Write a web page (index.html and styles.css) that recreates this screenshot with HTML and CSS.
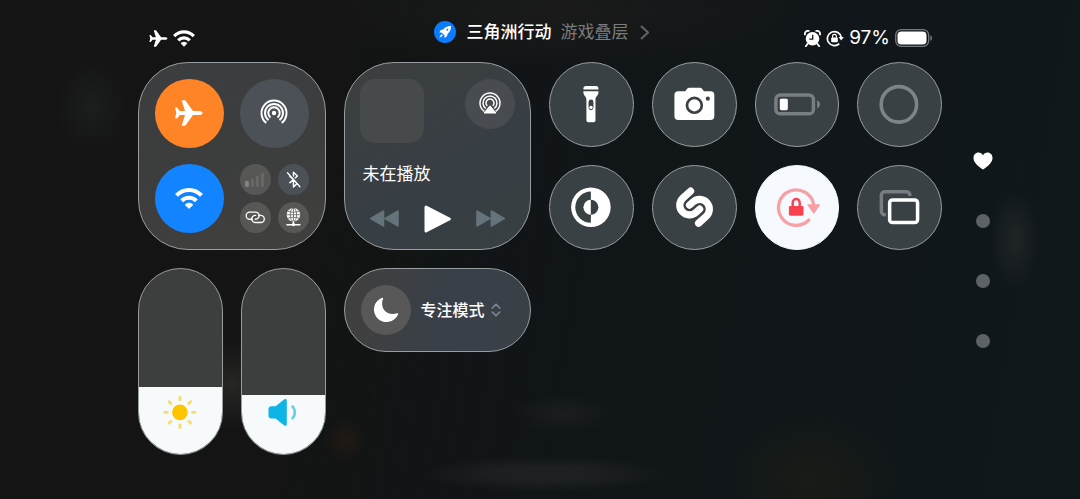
FILE: index.html
```
<!DOCTYPE html>
<html lang="zh-CN">
<head>
  <meta charset="UTF-8">
  <meta name="viewport" content="width=device-width, initial-scale=1">
  <title>控制中心</title>
  <link rel="stylesheet" href="styles.css">
</head>
<body>

<!-- shared icons -->
<svg class="sprite" aria-hidden="true">
  <symbol id="plane" viewBox="0 0 28 26">
    <path d="M27.6 13c0 1.4-1.8 2.1-3.6 2.1h-6L10.8 25c-.3.5-.6.7-1 .7H7.4c-.5 0-.7-.4-.5-.9L10 15.1H4.8l-2.4 3c-.2.3-.5.4-.9.4H.7c-.4 0-.6-.3-.5-.7L1.3 13 .2 8.2c-.1-.4.1-.7.5-.7h.8c.4 0 .7.1.9.4l2.4 3H10L6.9 1.2C6.7.7 6.9.3 7.4.3h2.4c.4 0 .7.2 1 .7L18 10.9h6c1.8 0 3.6.7 3.6 2.1z"/>
  </symbol>
  <symbol id="wifi" viewBox="0 0 28 21">
    <path d="M1.500 7.400a17.200 17.200 0 0 1 25 0M6.700 12.800a10.200 10.200 0 0 1 14.600 0" fill="none" stroke="currentColor" stroke-width="4"/>
    <path d="M14 20.600 10 16.700a5.600 5.600 0 0 1 8 0z" stroke="currentColor" stroke-width=".6" stroke-linejoin="round"/>
  </symbol>
</svg>

<header class="status">
  <div class="status-left">
    <svg class="s-plane"><use href="#plane"/></svg>
    <svg class="s-wifi"><use href="#wifi"/></svg>
  </div>
  <a class="game" href="#">
    <svg class="rocket" viewBox="0 0 22 22">
      <circle cx="11" cy="11" r="11" fill="#0a7cff"/>
      <path d="M17 5c-3.4-.2-5.800 1-7.700 3.500l-2.500.6-1.600 2.500 2.300-.1 3.100 3.100-.1 2.300 2.500-1.600.6-2.500C16 10.800 17.200 8.400 17 5z"/>
      <path d="M7.300 13 5.200 16.800 9 14.700z"/>
      <circle cx="13.300" cy="8.700" r="1" fill="#0a7cff"/>
    </svg>
    <span class="game-name">三角洲行动</span>
    <span class="game-sub">游戏叠层</span>
    <svg class="chev" viewBox="0 0 9 15"><path d="M1 1l7 6.500-7 6.500"/></svg>
  </a>
  <div class="status-right">
    <svg class="s-alarm" viewBox="0 0 17 17">
      <circle cx="8.500" cy="8.800" r="6.800"/>
      <path d="M1 4.500A3 3 0 0 1 4.700.9M16 4.500A3 3 0 0 0 12.300.9M3.500 14l-1.700 2.200M13.500 14l1.700 2.200" fill="none" stroke="#fff" stroke-width="1.800" stroke-linecap="round"/>
      <path d="M8.700 4.800v4.400H5.300" fill="none" stroke="#14181a" stroke-width="1.300"/>
    </svg>
    <svg class="s-lock" viewBox="0 0 18 17">
      <path d="M15.300 7.500A7 7 0 1 0 13.300 13.600" fill="none" stroke="#fff" stroke-width="1.700"/>
      <path d="M12.600 7h5.200l-2.600 3.600z"/>
      <rect x="5.200" y="7.500" width="6.600" height="4.800" rx=".8"/>
      <path d="M6.600 7.800V6.300a1.900 1.900 0 0 1 3.800 0v1.500" fill="none" stroke="#fff" stroke-width="1.200"/>
    </svg>
    <span class="percent">97%</span>
    <svg class="s-battery" viewBox="0 0 38 18">
      <rect x=".7" y=".7" width="33" height="16.600" rx="5.500" fill="none" stroke="#75797b" stroke-width="1.300"/>
      <rect x="2.500" y="2.500" width="29" height="13" rx="3.800"/>
      <path d="M35.300 6.200c2.300.7 2.300 4.900 0 5.600z" fill="#75797b"/>
    </svg>
  </div>
</header>

<main class="page">
  <div class="grid">

    <section class="tile big connect">
      <button class="round orange" aria-label="飞行模式"><svg class="i-plane"><use href="#plane"/></svg></button>
      <button class="round slate" aria-label="隔空投送">
        <svg class="i-drop" viewBox="0 0 28 28">
          <g fill="none" stroke="#fff" stroke-width="2">
            <path d="M6.300 23.900a12.500 12.500 0 1 1 15.400 0"/>
            <path d="M8.500 21.100a9 9 0 1 1 11 0"/>
            <path d="M10.500 18.500a5.700 5.700 0 1 1 7 0"/>
          </g>
          <circle cx="14" cy="14" r="2.200"/>
        </svg>
      </button>
      <button class="round blue" aria-label="无线局域网"><svg class="i-wifi"><use href="#wifi"/></svg></button>
      <div class="mini">
        <button class="round dim" aria-label="蜂窝数据">
          <svg viewBox="0 0 31 31">
            <rect x="5" y="17" width="4" height="6" rx="1.500" fill="#838383"/>
            <g fill="#676867">
              <rect x="11" y="15" width="3" height="8" rx="1"/>
              <rect x="16" y="12" width="3" height="11" rx="1"/>
              <rect x="21" y="9" width="3" height="14" rx="1"/>
            </g>
          </svg>
        </button>
        <button class="round slate" aria-label="蓝牙">
          <svg class="line" viewBox="0 0 31 31">
            <path d="M11.500 12l8 7.200-4 3.800V8.200l4 3.800-8 7.200" stroke="#fff" stroke-width="1.400" stroke-linejoin="round"/>
            <path d="M11 8.700l12 13.400" stroke="#4b5157" stroke-width="1.500"/>
            <path d="M9.500 8.800l12.500 14" stroke="#fff" stroke-width="1.300" stroke-linecap="round"/>
          </svg>
        </button>
        <button class="round dim" aria-label="个人热点">
          <svg class="line" viewBox="0 0 31 31" stroke="#fff" stroke-width="1.300" stroke-linecap="round">
            <path d="M12.500 17.300H9.800a3.600 3.600 0 0 1 0-7.200h5.900a3.600 3.600 0 0 1 2.900 5.700c-.9 1.300-2.200 1.600-3.300 1.500"/>
            <path d="M18.800 13.400h2a3.600 3.600 0 0 1 0 7.200h-5.500a3.600 3.600 0 0 1-2.900-5.700c.9-1.300 2.200-1.600 3.300-1.500"/>
          </svg>
        </button>
        <button class="round dim" aria-label="VPN">
          <svg viewBox="0 0 31 31">
            <circle cx="15.500" cy="12.800" r="6.800"/>
            <g fill="none" stroke="#5b5b59" stroke-width=".8">
              <ellipse cx="15.500" cy="12.800" rx="3.200" ry="6.800"/>
              <path d="M15.500 6v13.500M9 12.800h13M10 9.300c3.500 1.300 7.500 1.300 11 0M10 16.300c3.500-1.300 7.500-1.300 11 0"/>
            </g>
            <path d="M15.500 19.400v3.400M8.500 22.800h14M13.300 22.800h4.400" fill="none" stroke="#fff" stroke-width="1.500"/>
            <circle cx="15.500" cy="22.700" r="1.700"/>
          </svg>
        </button>
      </div>
    </section>

    <section class="tile big media">
      <div class="media-top">
        <div class="album"></div>
        <button class="round cast" aria-label="隔空播放">
          <svg class="i-cast" viewBox="0 0 24 24">
            <g fill="none" stroke="#fff" stroke-width="1.500">
              <path d="M6.300 19.300a10 10 0 1 1 11.400 0"/>
              <path d="M7.700 16.500a7 7 0 1 1 8.600 0"/>
              <path d="M9.200 13.900a4 4 0 1 1 5.600 0"/>
            </g>
            <path d="M12 13.800l6 7.200H6z" stroke="#fff" stroke-linejoin="round"/>
          </svg>
        </button>
      </div>
      <p class="media-title">未在播放</p>
      <div class="controls">
        <button aria-label="上一首"><svg class="i-skip" viewBox="0 0 29 17"><path d="M13.300 1.300v14.400L1 8.500zM27.800 1.300v14.400L15.300 8.500z"/></svg></button>
        <button aria-label="播放"><svg class="i-play" viewBox="0 0 27 28"><path d="M2 2l23.300 12L2 26z"/></svg></button>
        <button aria-label="下一首"><svg class="i-skip" viewBox="0 0 29 17"><path d="M1.200 1.300v14.400l12.400-7.200zM15.600 1.300v14.400L28 8.500z"/></svg></button>
      </div>
    </section>

    <button class="tile circle" aria-label="手电筒">
      <svg viewBox="0 0 85 85">
        <path d="M34.300 27.300v-1.100c0-1.500 1-2.500 2.500-2.500h10.500c1.500 0 2.500 1 2.500 2.500v1.100zM34.300 29h15.500v1c0 3.500-3.100 4-3.100 7.500v21.300c0 1.200-.8 2-2 2h-5.300c-1.200 0-2-.8-2-2V37.500c0-3.500-3.100-4-3.100-7.500z"/>
        <rect x="39.600" y="37.500" width="5" height="11" rx="2.500" fill="#3a4145"/>
        <circle cx="42.100" cy="45.800" r="1.800"/>
      </svg>
    </button>
    <button class="tile circle" aria-label="相机">
      <svg viewBox="0 0 85 85">
        <path d="M26 29h6.500c1.500 0 2.200-3.700 4.500-3.700h11.500c2.300 0 3 3.700 4.500 3.700h6a4 4 0 0 1 4 4v21.500a4 4 0 0 1-4 4H26a4 4 0 0 1-4-4V33a4 4 0 0 1 4-4z"/>
        <circle cx="42.500" cy="43.500" r="7.600" fill="none" stroke="#3a4145" stroke-width="2.800"/>
        <circle cx="56.300" cy="36.600" r="2.100" fill="#3a4145"/>
      </svg>
    </button>
    <button class="tile circle" aria-label="低电量模式">
      <svg viewBox="0 0 85 85">
        <rect x="20.400" y="32.800" width="38.600" height="19.400" rx="4.500" fill="none" stroke="#797e83" stroke-width="3.500"/>
        <rect x="24.500" y="36.700" width="8.200" height="11.800" rx="1.500"/>
        <path d="M62.700 38.300c4 1.200 4 7.200 0 8.400z" fill="#797e83"/>
      </svg>
    </button>
    <button class="tile circle" aria-label="操作">
      <svg viewBox="0 0 85 85"><circle cx="42" cy="42.500" r="18.200" fill="none" stroke="#7e8387" stroke-width="3.700"/></svg>
    </button>

    <button class="tile circle" aria-label="深色模式">
      <svg viewBox="0 0 85 85">
        <circle cx="42" cy="42.300" r="20.300"/>
        <path d="M42 26.300a16 16 0 0 0 0 32z" fill="#3a4145"/>
        <path d="M42 34.600a7.700 7.700 0 0 0 0 15.400z"/>
        <path d="M42 34.600a7.700 7.700 0 0 1 0 15.400z" fill="#3a4145"/>
      </svg>
    </button>
    <button class="tile circle" aria-label="音乐识别">
      <svg viewBox="0 0 85 85">
        <g transform="translate(42.700 42.300) rotate(-42)" fill="none" stroke="#fff" stroke-width="7.400" stroke-linecap="round">
          <path d="M8-15H-2.500a10 10 0 0 0 0 20H2.500"/>
          <path d="M-8 15H2.500a10 10 0 0 0 0-20H-2.500"/>
        </g>
      </svg>
    </button>
    <button class="tile circle on" aria-label="方向锁定" aria-pressed="true">
      <svg viewBox="0 0 85 85">
        <path d="M59.300 40A18.200 18.200 0 1 0 54.300 55.500" fill="none" stroke="#f6a1a6" stroke-width="3.400" stroke-linecap="round"/>
        <path d="M53.500 40h11.500l-5.700 8z" fill="#f6a1a6" stroke="#f6a1a6" stroke-width="1.500" stroke-linejoin="round"/>
        <rect x="33.800" y="41" width="15" height="10" rx="1.500" fill="#f8434f"/>
        <path d="M37.700 41.500v-4a3.600 3.600 0 0 1 7.200 0v4" fill="none" stroke="#f8434f" stroke-width="2.500"/>
      </svg>
    </button>
    <button class="tile circle" aria-label="屏幕镜像">
      <svg class="line" viewBox="0 0 85 85" stroke-width="3.600">
        <path d="M28.600 50H27.500a3.500 3.500 0 0 1-3.500-3.500V30a3.500 3.500 0 0 1 3.500-3.500h22.300a3.500 3.500 0 0 1 3.500 3.500v.9" stroke="#787d81"/>
        <rect x="32.500" y="34.800" width="28.700" height="23.300" rx="3" stroke="#fff"/>
      </svg>
    </button>

    <label class="tile slider">
      <input type="range" min="0" max="100" value="36" style="--level: 36%" aria-label="亮度">
      <svg viewBox="0 0 85 85">
        <circle cx="42" cy="42.500" r="8" fill="#fdc500"/>
        <path d="M42 29.500V27M42 55.500V58M29 42.500H26.500M55 42.500H57.500M32.800 33.300L31 31.500M51.200 51.700L53 53.500M51.200 33.300L53 31.500M32.800 51.700L31 53.500" stroke="#f5dc73" stroke-width="3" stroke-linecap="round"/>
      </svg>
    </label>
    <label class="tile slider">
      <input type="range" min="0" max="100" value="32" style="--level: 32%" aria-label="音量">
      <svg viewBox="0 0 85 85">
        <path d="M30.500 37h4.200l9-7.200c.8-.6 1.500-.3 1.500.6v24.200c0 .9-.7 1.200-1.500.6l-9-7.200h-4.200c-1.500 0-2.500-1-2.500-2.500v-6c0-1.500 1-2.500 2.500-2.500z" fill="#0eb4e6" stroke="#0eb4e6" stroke-width="1.600" stroke-linejoin="round"/>
        <path d="M52 36.500c3 3.800 3 8.200 0 12" fill="none" stroke="#6bcfe8" stroke-width="2.800" stroke-linecap="round"/>
      </svg>
    </label>

    <button class="tile focus">
      <span class="round moon"><svg viewBox="0 0 49 49"><path d="M20.700 12.500c.7-.3 1.200.2.900.9-3.500 8.600 3 17.300 13.800 14.400.8-.2 1.300.3.900 1A12.300 12.300 0 1 1 20.700 12.500z"/></svg></span>
      <span class="focus-name">专注模式</span>
      <svg class="updown" viewBox="0 0 10 14"><path d="M1.200 5L5 1.300 8.800 5M1.200 9L5 12.700 8.800 9"/></svg>
    </button>

  </div>

  <nav class="pager">
    <button aria-label="个人收藏"><svg class="heart" viewBox="0 0 20 18"><path d="M10 17.600C4.500 13.800.5 10.200.5 5.900.5 2.900 2.700.6 5.400.6c2 0 3.700 1 4.600 2.800C10.900 1.600 12.600.6 14.600.6c2.700 0 4.900 2.300 4.900 5.300 0 4.300-4 7.900-9.500 11.700z"/></svg></button>
    <button aria-label="第 2 页"><span class="dot"></span></button>
    <button aria-label="第 3 页"><span class="dot"></span></button>
    <button aria-label="第 4 页"><span class="dot"></span></button>
  </nav>
</main>

<script>
document.querySelectorAll('.slider input').forEach(function (input) {
  input.addEventListener('input', function () {
    this.style.setProperty('--level', this.value + '%');
  });
});
</script>

</body>
</html>
```
FILE: styles.css
```
* { box-sizing: border-box; }

body {
  margin: 0;
  min-height: 100vh;
  color: #fff;
  font-family: Inter, "Noto Sans CJK SC", sans-serif;
  background:
    radial-gradient(ellipse 125px 18px at 545px 474px, #1d2021 40%, transparent),
    radial-gradient(ellipse 50px 20px at 563px 414px, #1b1e1e, transparent),
    radial-gradient(circle 22px at 345px 440px, #211915, transparent),
    radial-gradient(ellipse 25px 50px at 1015px 240px, #202527, transparent),
    radial-gradient(ellipse 35px 45px at 92px 106px, #1c1e1e, transparent),
    radial-gradient(circle 45px at 232px 385px, #262625, transparent),
    radial-gradient(ellipse 90px 70px at 810px 480px, #181c16, transparent),
    radial-gradient(ellipse 260px 60px at 560px 10px, #1a1b1a, transparent),
    linear-gradient(100deg, #141514 0%, #131413 30%, #101518 55%, #10181b 100%);
}

svg { display: block; fill: #fff; color: #fff; }
.line { fill: none; }
.sprite { position: absolute; width: 0; height: 0; }

button { border: none; padding: 0; margin: 0; background: none; color: inherit; font: inherit; cursor: pointer; }

/* status bar */
.status { display: grid; grid-template-columns: 1fr auto 1fr; align-items: center; height: 62px; padding: 0 147px 0 149px; }
.status-left, .status-right { display: flex; align-items: center; padding-top: 14px; }
.status-left { gap: 5px; }
.status-right { justify-content: flex-end; gap: 5px; }
.s-plane { width: 19px; height: 17px; }
.s-wifi { width: 22px; height: 17px; }
.s-alarm { width: 17px; height: 17px; }
.s-lock { width: 18px; height: 17px; }
.s-battery { width: 38px; height: 18px; }
.percent { font-size: 19px; line-height: 24px; }

.game { display: flex; align-items: center; padding-top: 2px; font-size: 17px; line-height: 26px; color: #fff; text-decoration: none; }
.rocket { width: 22px; height: 22px; margin-right: 11px; }
.game-name { font-weight: 500; margin-right: 9px; }
.game-sub { color: #7b7d7e; margin-right: 11px; }
.chev { width: 9px; height: 15px; fill: none; stroke: #626566; stroke-width: 2; }

/* tiles */
.page { display: grid; grid-template-columns: 1fr 82px; align-items: start; padding: 0 56px 0 138px; }
.grid { display: grid; grid-template-columns: repeat(8, minmax(0, 1fr)); grid-template-rows: repeat(4, minmax(0, 1fr)); gap: 18px; aspect-ratio: 804 / 393; }
.tile { min-width: 0; min-height: 0; border: 1px solid #9a9d9f; border-radius: 50px; background: #3a4145; overflow: hidden; }
.big { grid-column: span 2; grid-row: span 2; }

.round { display: flex; align-items: center; justify-content: center; border-radius: 50%; }
.orange { background: #ff8425; }
.blue { background: #1384ff; }
.slate { background: #4b5156; }
.dim { background: #575856; }

.connect { display: grid; grid-template-columns: 1fr 1fr; grid-template-rows: 1fr 1fr; gap: 16px; padding: 16px; background: linear-gradient(170deg, #3b3e40, #3c3d3d 50%, #40403d); }
.mini { display: grid; grid-template-columns: 1fr 1fr; grid-template-rows: 1fr 1fr; gap: 7px; }
.mini svg { width: 100%; }
.i-plane { width: 28px; height: 26px; }
.i-drop { width: 28px; height: 28px; }
.i-wifi { width: 28px; height: 21px; }

.media { display: flex; flex-direction: column; padding: 16px 15px; background: linear-gradient(150deg, #3c3f3f, #373e44 60%, #394043); }
.media-top { display: flex; justify-content: space-between; align-items: flex-start; }
.album { width: 64px; height: 64px; border-radius: 15px; background: #474a4a; }
.cast { width: 50px; height: 50px; background: #484c50; }
.i-cast { width: 24px; height: 24px; }
.media-title { margin: 18px 0 0 3px; font-size: 17px; line-height: 26px; }
.controls { display: flex; justify-content: space-between; align-items: center; margin-top: auto; padding: 0 10px; }
.i-skip { width: 29px; height: 17px; fill: #65737b; stroke: #65737b; stroke-width: 2; stroke-linejoin: round; }
.i-play { width: 27px; height: 28px; stroke: #fff; stroke-width: 3; stroke-linejoin: round; }

.circle { border-radius: 50%; }
.circle svg { width: 100%; }
.on { background: #f6fafe; border-color: #f6fafe; }

.slider { display: grid; grid-row: span 2; background: #3d3f3e; }
.slider input, .slider svg { grid-area: 1 / 1; width: 100%; }
.slider input {
  appearance: none;
  writing-mode: vertical-lr;
  direction: rtl;
  height: 100%;
  margin: 0;
  background: linear-gradient(to top, #f6fafa var(--level), transparent var(--level));
}
.slider input::-webkit-slider-thumb { appearance: none; width: 100%; height: 1px; }
.slider svg { align-self: end; pointer-events: none; }

.focus { grid-column: span 2; display: flex; align-items: center; padding: 0 16px; background: linear-gradient(100deg, #403f3d, #39404a 60%, #394146); }
.moon { width: 50px; height: 50px; margin-right: 10px; background: #575857; }
.moon svg { width: 50px; height: 50px; }
.focus-name { font-size: 16px; line-height: 24px; font-weight: 500; margin-right: 6px; }
.updown { width: 10px; height: 14px; fill: none; stroke: #838a90; stroke-width: 1.6px; stroke-linecap: round; }

/* page dots */
.pager { display: grid; grid-auto-rows: 60px; justify-items: center; padding-top: 69px; }
.pager button { display: flex; align-items: center; }
.heart { width: 20px; height: 18px; }
.dot { width: 14px; height: 14px; border-radius: 50%; background: #5d6264; }
```
